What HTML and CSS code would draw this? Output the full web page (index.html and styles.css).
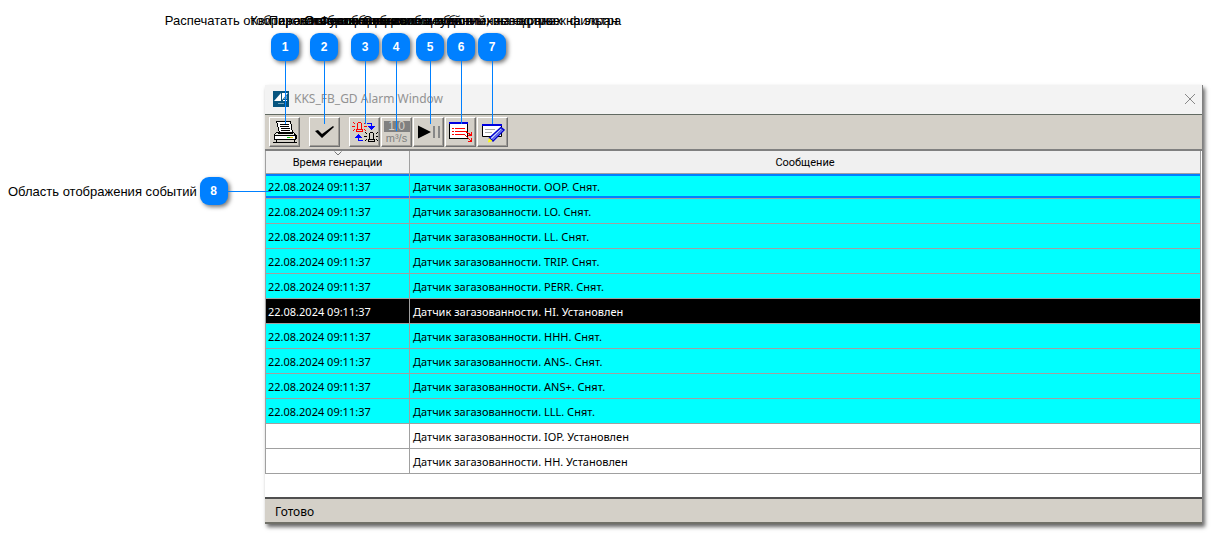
FILE: index.html
```
<!DOCTYPE html>
<html lang="ru">
<head>
<meta charset="utf-8">
<title>KKS_FB_GD Alarm Window</title>
<link rel="stylesheet" href="styles.css">
</head>
<body>
<main class="figure">
  <section class="window">
    <header class="titlebar">
      <svg class="logo" width="16" height="16" viewBox="0 0 16 16" aria-hidden="true"><path fill="#07557f" d="M0 0h16v16H0z"/><path fill="#fff" d="M1 10 8 2v8zM9 2h6L9 9zM10 9h4v1h-4z"/><path stroke="#78a6bd" d="M5 12.500h6"/><path fill="#78a6bd" d="M10 8l4-4v4z"/></svg>
      <h1 class="title">KKS_FB_GD Alarm Window</h1>
      <button class="close" aria-label="Закрыть"><svg width="12" height="12" viewBox="0 0 12 12"><path d="M1 1l10 10M11 1 1 11" stroke="#888" fill="none"/></svg></button>
    </header>
    <div class="toolbar">
      <button class="tool" aria-label="Печать"><svg width="24" height="24" viewBox="0 0 24 24" shape-rendering="crispEdges"><path d="M4 12 1 15.500v3h22v-3L20 12z" fill="#e8e8e0" stroke="#000"/><path d="M3.500 1.500h14l2 11h-13z" fill="#fff" stroke="#000"/><path d="M7 4.500h9M7 6.500h9M8 8.500h9M8 10.500h9M5 13.500h15" stroke="#000"/><path d="M1.500 15.500h21v4h-21z" fill="#fff" stroke="#000"/><path d="M14 17.500h3" stroke="#00c000"/><path d="M17 17.500h3" stroke="#e0c000"/><path d="M3 19.500h18v3H3z" fill="#d4d0c8" stroke="#000"/><path d="M0 22.500h24" stroke="#000"/></svg></button>
      <button class="tool spaced" aria-label="Квитировать"><svg width="24" height="24" viewBox="0 0 24 24"><path d="M2 11l3-1 4 4 11-8 1 1-12 11z" fill="#000"/></svg></button>
      <button class="tool spaced" aria-label="Переход"><svg width="26" height="24" viewBox="0 0 26 24" shape-rendering="crispEdges"><g fill="none" stroke="red"><path d="M5.500 9V3.500l1-1h2l1 1V9M4.500 9.500h6v2h-6z"/><path d="M1 2l2 2M0 6.500h3M1 11l2-2M14 2l-2 2M12 6.500h3M14 11l-2-2"/></g><g fill="none" stroke="#000"><path d="M17.500 20v-6.500l1-1h2l1 1V20M16.500 19.500h6v2h-6z"/><path d="M13 12l2 2M12 16.500h3M13 21l2-2M26 12l-2 2M24 16.500h2M26 21l-2-2"/></g><path d="M15 3.500h4V7M6.500 17v3.500H11" fill="none" stroke="#00f"/><path d="M16 6h7l-3.500 4zM3 18h7l-3.500-4z" fill="#00f"/></svg></button>
      <button class="tool" aria-label="Единицы измерения"><span class="unit-value">1.0</span><span class="unit-name">m³/s</span></button>
      <button class="tool" aria-label="Пуск и пауза"><svg width="24" height="24" viewBox="0 0 24 24"><path d="M1 5.500v13L14 12z" fill="#000"/><path d="M16 6h2v12h-2zM21 6h2v12h-2z" fill="#888"/></svg></button>
      <button class="tool" aria-label="Список"><svg width="25" height="24" viewBox="0 0 25 24" shape-rendering="crispEdges"><path d="M1.500 3.500h18v15h-18z" fill="#fff" stroke="#000"/><path d="M1 3h19" stroke="#0000e0" stroke-width="2"/><path d="M4 8.500h2M7 8.500h10M4 11.500h2M7 11.500h10M4 14.500h2M7 14.500h10M17 11l6 4M17 15l6 6M20 15.500h3.500V12M20 21.500h3.500V18" stroke="red" fill="none"/></svg></button>
      <button class="tool" aria-label="Изменить"><svg width="25" height="24" viewBox="0 0 25 24"><path d="M2.500 4.500h19v12h-19z" fill="#fff" stroke="#000"/><path d="M2 5h20" stroke="#0000e0" stroke-width="2"/><path d="M5 9.500h10M5 12.500h7" stroke="#aaa"/><path d="M21 7.500l3 2.500-11 11-3.500-3z" fill="#c8d4ff" stroke="#0000d0" stroke-width="1.500"/><path d="M22.500 9 11.500 20" stroke="#0000d0"/><path d="M9 18l3.500 3L8 22.500z" fill="#ff0"/></svg></button>
    </div>
    <table class="events">
      <colgroup><col class="col-time"><col></colgroup>
      <thead><tr><th><svg class="sort" width="8" height="5" viewBox="0 0 8 5" aria-hidden="true"><path d="M.5.5 4 4 7.500.5" fill="none" stroke="#777"/></svg>Время генерации</th><th>Сообщение</th></tr></thead>
      <tbody>
        <tr class="cleared current"><td>22.08.2024 09:11:37</td><td>Датчик загазованности. OOP. Снят.</td></tr>
        <tr class="cleared"><td>22.08.2024 09:11:37</td><td>Датчик загазованности. LO. Снят.</td></tr>
        <tr class="cleared"><td>22.08.2024 09:11:37</td><td>Датчик загазованности. LL. Снят.</td></tr>
        <tr class="cleared"><td>22.08.2024 09:11:37</td><td>Датчик загазованности. TRIP. Снят.</td></tr>
        <tr class="cleared"><td>22.08.2024 09:11:37</td><td>Датчик загазованности. PERR. Снят.</td></tr>
        <tr class="selected"><td>22.08.2024 09:11:37</td><td>Датчик загазованности. HI. Установлен</td></tr>
        <tr class="cleared"><td>22.08.2024 09:11:37</td><td>Датчик загазованности. HHH. Снят.</td></tr>
        <tr class="cleared"><td>22.08.2024 09:11:37</td><td>Датчик загазованности. ANS-. Снят.</td></tr>
        <tr class="cleared"><td>22.08.2024 09:11:37</td><td>Датчик загазованности. ANS+. Снят.</td></tr>
        <tr class="cleared"><td>22.08.2024 09:11:37</td><td>Датчик загазованности. LLL. Снят.</td></tr>
        <tr><td></td><td>Датчик загазованности. IOP. Установлен</td></tr>
        <tr><td></td><td>Датчик загазованности. HH. Установлен</td></tr>
      </tbody>
    </table>
    <footer class="status">Готово</footer>
  </section>
  <div class="callout c1"><span class="label">Распечатать отображаемые сообщения</span><b class="badge">1</b></div>
  <div class="callout c2"><span class="label">Квитировать сообщения</span><b class="badge">2</b></div>
  <div class="callout c3"><span class="label">Переключение типа сообщений</span><b class="badge">3</b></div>
  <div class="callout c4"><span class="label">Функция не используется</span><b class="badge">4</b></div>
  <div class="callout c5"><span class="label">Остановка обновления данных на экране</span><b class="badge">5</b></div>
  <div class="callout c6"><span class="label">Отображение списка событий, выводимых на экран</span><b class="badge">6</b></div>
  <div class="callout c7"><span class="label">Создание и обновление настроек фильтра</span><b class="badge">7</b></div>
  <div class="callout side"><span class="label">Область отображения событий</span><b class="badge">8</b></div>
</main>
</body>
</html>
```
FILE: styles.css
```
* { box-sizing: border-box; }
body { margin: 0; background: #fff; color: #000; font-family: "Liberation Sans", Arial, sans-serif; }
.figure { position: relative; padding: 85px 8px 12px 265px; }

.window { background: #fff; border-right: 1px solid #808080; box-shadow: 2px 3px 4px #666; }
.titlebar { display: flex; align-items: center; height: 29px; padding: 0 6px 2px 8px; background: #f3f3f3; }
.title { flex: 1; margin: 0 0 0 5px; font: 12px "Noto Sans", sans-serif; color: #929292; }
.close { display: flex; padding: 0; border: 0; background: none; }

.toolbar { display: flex; height: 37px; gap: 1px; padding: 2px 4px; background: #d4d0c8; border-top: 1px solid #626a62; border-bottom: 2px solid #808080; }
.tool { display: flex; flex-direction: column; align-items: center; justify-content: center; width: 31px; height: 30px; padding: 0; background: #d4d0c8; border: 1px solid; border-color: #fff #707070 #707070 #fff; box-shadow: inset -1px -1px #a09c96; }
.tool.spaced { margin-left: 8px; }
.unit-value { width: 26px; background: #808080; color: #d4d0c8; font: 12px/11px "Liberation Sans", sans-serif; }
.unit-name { color: #808080; font: 11px/12px "Liberation Sans", sans-serif; }

.events { width: calc(100% - 1px); table-layout: fixed; border-collapse: collapse; font: 11px/16px "Noto Sans", sans-serif; }
.col-time { width: 144px; }
.events th { position: relative; height: 22px; padding: 3px 0 0; background: #f0f0f0; border: 1px solid #a0a0a0; border-top: 0; font: 11px/16px Roboto, sans-serif; }
.events td { height: 25px; padding: 2px 3px 0; border: 1px solid #a0a0a0; }
.events td:first-child { padding-left: 2px; }
.sort { position: absolute; top: 0; left: 50%; transform: translateX(-50%); }
.cleared td { background: #0ff; }
.current td { box-shadow: inset 0 2px #0080ff, inset 0 -2px #0080ff; }
.selected td { background: #000; color: #fff; }

.status { height: 27px; margin-top: 23px; padding-left: 10px; background: #d4d0c8; border-top: 2px solid #505050; border-bottom: 2px solid #707068; font: 12px/25px "Noto Sans", sans-serif; }

.callout { position: absolute; top: 12px; display: flex; flex-direction: column; align-items: center; width: 28px; font-size: 13px; line-height: 17px; }
.label { white-space: nowrap; }
.badge { width: 28px; height: 28px; margin-top: 4px; border-radius: 9px; background: #0080ff; color: #fff; box-shadow: 2px 2px 4px #777; font: bold 12px/28px "Liberation Sans", sans-serif; text-align: center; }
.callout::after { content: ""; width: 1px; height: 63px; background: #0080ff; }
.c1 { left: 271px; }
.c2 { left: 310px; }
.c3 { left: 351px; }
.c4 { left: 382px; }
.c4::after { height: 70px; }
.c5 { left: 416px; }
.c6 { left: 447px; }
.c7 { left: 478px; }
.side { top: 177px; left: 8px; flex-direction: row; width: auto; }
.side .badge { margin: 0 0 0 3px; }
.side::after { width: 43px; height: 1px; }
```
